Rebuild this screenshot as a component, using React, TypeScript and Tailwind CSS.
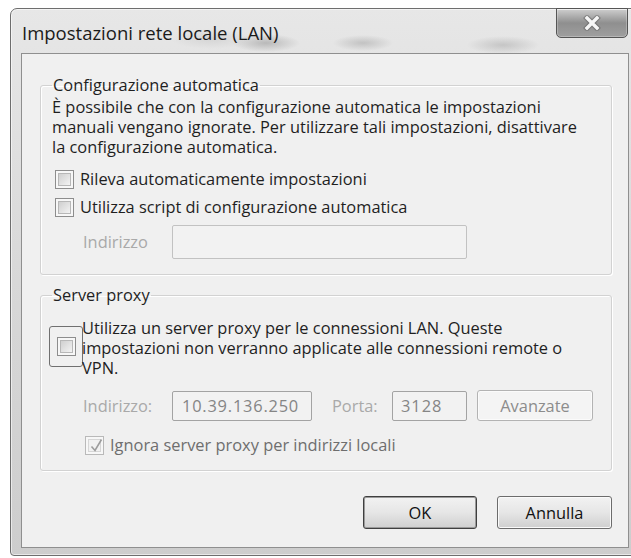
import React from "react";

function Check({ checked = false, disabled = false }: { checked?: boolean; disabled?: boolean }) {
  return (
    <span
      className={
        "w-[19px] h-[19px] shrink-0 border bg-[#f7f7f7] p-[2px] flex " +
        (disabled ? "border-[#b9b9b9]" : "border-[#8d8d8d]")
      }
    >
      <span
        className={
          "relative w-full h-full border flex items-center justify-center " +
          (disabled
            ? "border-[#d6d6d6] bg-[#f1f1f1]"
            : "border-[#b7b7b7] bg-gradient-to-br from-[#cfcfcf] to-[#f3f3f3]")
        }
      >
        {checked && (
          <svg width="15" height="15" viewBox="0 0 15 15" className="absolute -top-[2px] left-[0px]">
            <path d="M2.5 8.5 L6 12.5 L12.5 1.5" fill="none" stroke="#9c9c9c" strokeWidth="1.6" />
          </svg>
        )}
      </span>
    </span>
  );
}

function CloseGlyph() {
  return (
    <svg width="18" height="16" viewBox="0 0 18 16">
      <path d="M4 3 L14 13 M14 3 L4 13" stroke="#5a5a5a" strokeWidth="5.5" strokeLinecap="square" opacity="0.55" />
      <path d="M4 3 L14 13 M14 3 L4 13" stroke="#f6f6f6" strokeWidth="3.4" strokeLinecap="square" />
    </svg>
  );
}

export default function App() {
  return (
    <div className="w-[631px] h-[558px] bg-white overflow-hidden pt-[8px] pl-[10px] font-['Open_Sans',sans-serif] text-[#1f1f1f]">
      {/* window frame */}
      <div className="relative w-[630px] h-[548px] rounded-t-[7px] rounded-b-[4px] border border-[#6e6e6e] bg-gradient-to-b from-[#e7e7e7] via-[#d8d8d8] to-[#cdcdcd] shadow-[inset_0_0_0_1px_rgba(255,255,255,0.55)]">
        {/* title bar */}
        <div className="h-[44px] pl-[11px] pt-[4px] flex items-center bg-[radial-gradient(ellipse_34px_9px_at_255px_34px,rgba(70,70,70,0.28),transparent),radial-gradient(ellipse_30px_8px_at_352px_34px,rgba(70,70,70,0.22),transparent),radial-gradient(ellipse_36px_9px_at_492px_36px,rgba(70,70,70,0.2),transparent),radial-gradient(ellipse_40px_10px_at_200px_30px,rgba(120,120,120,0.15),transparent)]">
          <span className="text-[18.5px] leading-[24px] text-[#1a1a1a]">Impostazioni rete locale (LAN)</span>
        </div>

        {/* close button */}
        <div className="absolute -top-[1px] right-[11px] w-[72px] h-[30px] rounded-b-[5px] border border-[#555555] bg-gradient-to-b from-[#cfcfcf] via-[#8f8f8f] to-[#9f9f9f] shadow-[inset_0_1px_0_rgba(255,255,255,0.6),inset_0_0_0_1px_rgba(255,255,255,0.25)] flex items-center justify-center">
          <CloseGlyph />
        </div>

        {/* client area */}
        <div className="ml-[10px] w-[608px] h-[495px] border border-[#8f8f8f] bg-[#f0f0f0] pl-[18px] pr-[16px] pt-[21px] text-[16.4px] leading-[20px]">
          <fieldset className="border border-[#d2d2d2] rounded-[3px] px-[11px] pb-[15px] shadow-[inset_1px_1px_0_#ffffff,1px_1px_0_#ffffff]">
            <legend className="px-[1px] leading-[20px]">Configurazione automatica</legend>
            <p className="mt-[2px] leading-[20px]">
              È possibile che con la configurazione automatica le impostazioni
              <br />
              manuali vengano ignorate. Per utilizzare tali impostazioni, disattivare
              <br />
              la configurazione automatica.
            </p>
            <div className="mt-[8px] h-[28px] flex items-center gap-[6px] ml-[3px]">
              <Check />
              <span>Rileva automaticamente impostazioni</span>
            </div>
            <div className="h-[28px] flex items-center gap-[6px] ml-[3px]">
              <Check />
              <span>Utilizza script di configurazione automatica</span>
            </div>
            <div className="mt-[4px] h-[34px] flex items-center ml-[31px]">
              <span className="w-[89px] text-[#a9a9a9]">Indirizzo</span>
              <div className="w-[295px] h-[34px] border border-[#c2c2c2] rounded-[2px] bg-[#f2f2f2]" />
            </div>
          </fieldset>

          <fieldset className="mt-[10px] border border-[#d2d2d2] rounded-[3px] px-[11px] pb-[15px] shadow-[inset_1px_1px_0_#ffffff,1px_1px_0_#ffffff]">
            <legend className="px-[1px] leading-[20px]">Server proxy</legend>
            <div className="mt-[13px] flex items-start">
              <div className="-ml-[3px] mt-[8px] w-[34px] h-[41px] shrink-0 border border-[#707070] rounded-[3px] flex items-center justify-center">
                <Check />
              </div>
              <p className="-ml-[1px] leading-[20px]">
                Utilizza un server proxy per le connessioni LAN. Queste
                <br />
                impostazioni non verranno applicate alle connessioni remote o
                <br />
                VPN.
              </p>
            </div>
            <div className="mt-[12px] h-[31px] flex items-center ml-[31px]">
              <span className="w-[89px] text-[#a9a9a9]">Indirizzo:</span>
              <div className="w-[140px] h-[30px] border border-[#a3a3a3] rounded-[2px] bg-[#f2f2f2] pl-[9px] flex items-center text-[#858585] tracking-[0.8px]">
                10.39.136.250
              </div>
              <span className="ml-[20px] w-[60px] text-[#a9a9a9]">Porta:</span>
              <div className="w-[75px] h-[30px] border border-[#a3a3a3] rounded-[2px] bg-[#f2f2f2] pl-[8px] flex items-center text-[#858585] tracking-[1px]">
                3128
              </div>
              <div className="ml-[10px] w-[116px] h-[31px] border border-[#b3b3b3] rounded-[3px] bg-[#f4f4f4] shadow-[inset_0_0_0_1px_#fbfbfb] flex items-center justify-center text-[#8c8c8c]">
                Avanzate
              </div>
            </div>
            <div className="mt-[14px] h-[20px] flex items-center gap-[6px] ml-[33px]">
              <Check checked disabled />
              <span className="text-[#6e6e6e]">Ignora server proxy per indirizzi locali</span>
            </div>
          </fieldset>

          <div className="mt-[25px] flex justify-end gap-[20px]">
            <div className="w-[114px] h-[33px] border border-[#3f3f3f] rounded-[3px] bg-gradient-to-b from-[#f2f2f2] via-[#e6e6e6] to-[#cfcfcf] shadow-[inset_0_0_0_1px_#9a9a9a] flex items-center justify-center text-[#111111]">
              OK
            </div>
            <div className="w-[115px] h-[33px] border border-[#6c6c6c] rounded-[3px] bg-gradient-to-b from-[#f2f2f2] via-[#e6e6e6] to-[#cfcfcf] shadow-[inset_0_0_0_1px_#fafafa] flex items-center justify-center text-[#111111]">
              Annulla
            </div>
          </div>
        </div>
      </div>
    </div>
  );
}
